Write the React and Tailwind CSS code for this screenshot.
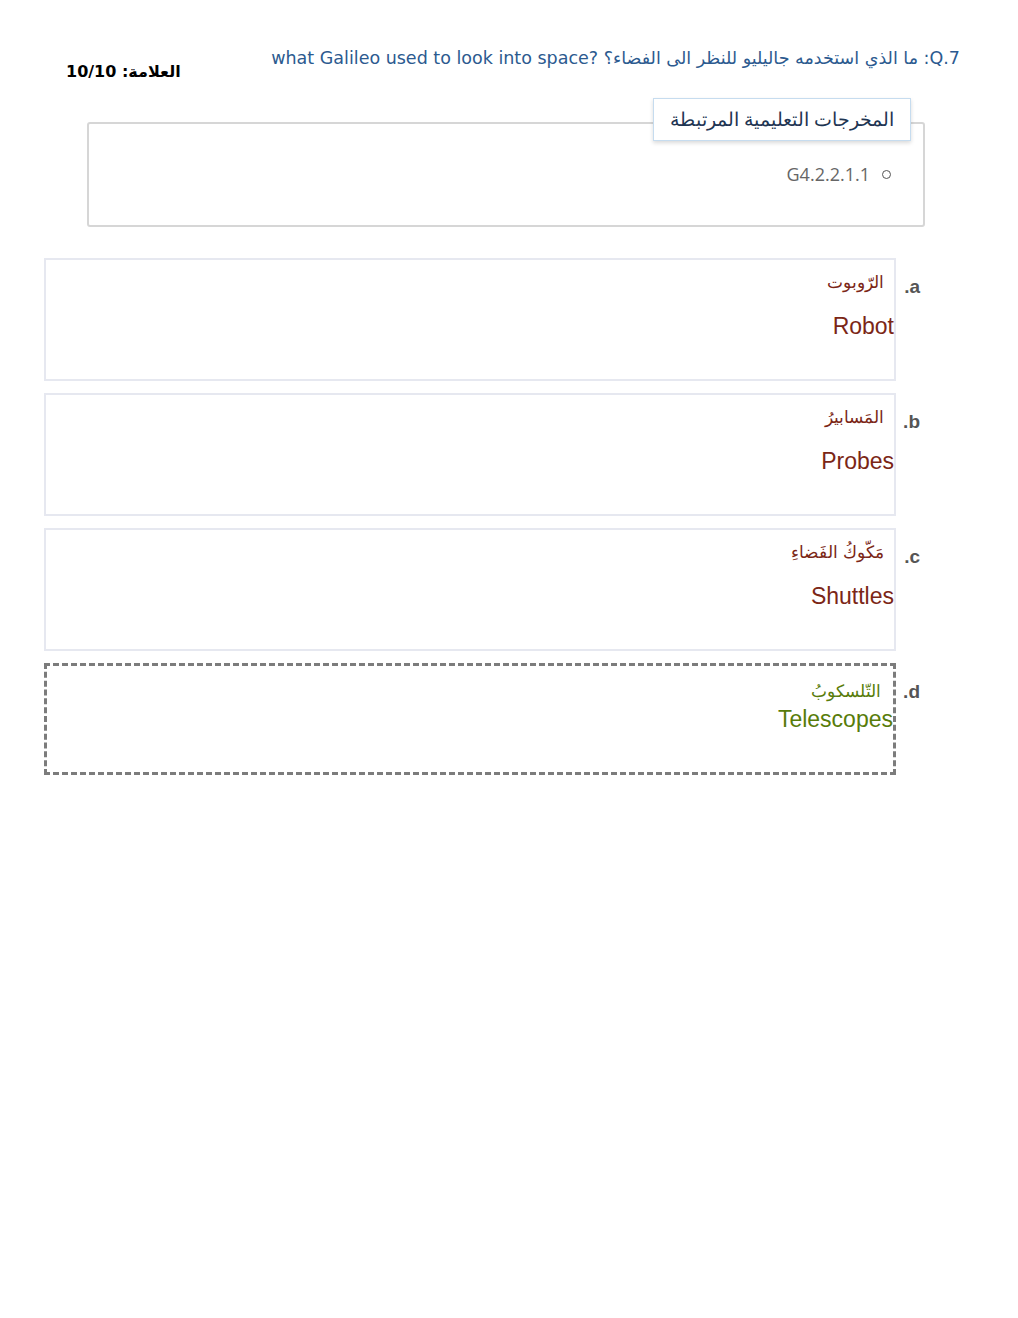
const options = [
  { key: 'a', ar: 'الرّوبوت', en: 'Robot' },
  { key: 'b', ar: 'المَسابيرُ', en: 'Probes' },
  { key: 'c', ar: 'مَكّوكُ الفَضاءِ', en: 'Shuttles' },
];

function OptionRow({ label, children }) {
  return (
    <div className="flex items-start">
      <div className="w-[29px] shrink-0 pt-[15px] pr-[5px] text-right text-[19px] font-bold text-[#555] font-['Liberation_Sans',sans-serif]">
        {label}.
      </div>
      {children}
    </div>
  );
}

export default function App() {
  return (
    <div dir="rtl" className="min-h-[1318px] w-[1018px] bg-white font-['DejaVu_Sans',sans-serif]">
      <div className="flex justify-between items-start pt-[45px] pr-[58px] pl-[66px]">
        <div className="text-[17.5px] leading-[26px] text-[#2c5a8f]">
          <span>Q.7: </span>ما الذي استخدمه جاليليو للنظر الى الفضاء؟ <span dir="ltr">what Galileo used to look into space?</span>
        </div>
        <div className="pt-[15px] text-[16px] leading-[24px] font-bold text-black">العلامة: 10/10</div>
      </div>

      <div className="relative mt-[38px] mr-[93px] ml-[87px] h-[105px] rounded-[3px] border-2 border-[#d6d6d6]">
        <div className="absolute -top-[26px] right-[12px] h-[43px] w-[258px] border border-[#c6dcef] bg-white shadow-[0_2px_4px_rgba(0,0,0,0.15)] flex items-center justify-center text-[19px] font-medium font-['Noto_Sans',sans-serif] text-[#1e3552]">
          المخرجات التعليمية المرتبطة
        </div>
        <ul className="pt-[37px] pr-[32px]">
          <li className="flex items-center gap-[12px] text-[18px] text-[#666] font-['Open_Sans',sans-serif]">
            <span className="inline-block h-[9px] w-[9px] rounded-full border border-[#555]" />
            <span>G4.2.2.1.1</span>
          </li>
        </ul>
      </div>

      <div className="mt-[31px] mr-[93px] ml-[44px] flex flex-col gap-[12px] font-['Liberation_Sans',sans-serif]">
        {options.map((o) => (
          <OptionRow key={o.key} label={o.key}>
            <div className="flex-1 h-[123px] border-2 border-[#e6e8f0] text-[#7b2616]">
              <div className="pt-[10px] pr-[10px] text-[17px] leading-[26px]">{o.ar}</div>
              <div className="pt-[15px] text-[23px] leading-[30px]">{o.en}</div>
            </div>
          </OptionRow>
        ))}
        <OptionRow label="d">
          <div className="flex-1 h-[112px] border-[3px] border-dashed border-[#7c7c7c] text-[#587c0a]">
            <div className="pt-[14px] pr-[12px] text-[17px] leading-[24px]">التّلسكوبُ</div>
            <div className="pt-[1px] text-[23px] leading-[28px]">Telescopes</div>
          </div>
        </OptionRow>
      </div>
    </div>
  );
}
